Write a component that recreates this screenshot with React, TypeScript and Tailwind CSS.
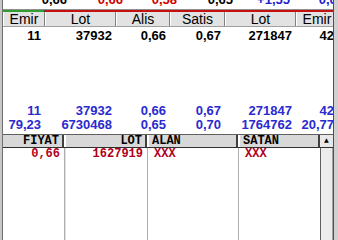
import React from 'react';

const topCols = 'grid-cols-[42px_71px_54px_55px_71px_42px]';

const prevRow = [
  { v: '0,66', c: 'text-black', w: 'w-[64px]' },
  { v: '0,66', c: 'text-[#d00000]', w: 'w-[56px]' },
  { v: '0,58', c: 'text-[#d00000]', w: 'w-[54px]' },
  { v: '0,65', c: 'text-black', w: 'w-[56px]' },
  { v: '+1,55', c: 'text-[#2020d0]', w: 'w-[57px]' },
  { v: '0,05', c: 'text-[#2020d0]', w: 'w-[54px]' },
];

const headers = ['Emir', 'Lot', 'Alis', 'Satis', 'Lot', 'Emir'];

const Row: React.FC<{ values: string[]; color: string }> = ({ values, color }) => (
  <div className={`grid ${topCols} h-[13px] leading-[13px] font-bold text-[13px] ${color}`}>
    {values.map((v, i) => (
      <div key={i} className={`text-right pr-[4px] ${i === 5 ? 'pr-0 text-left pl-[5px]' : ''}`}>
        {v}
      </div>
    ))}
  </div>
);

const App: React.FC = () => {
  return (
    <div
      className="w-[338px] h-[240px] overflow-hidden bg-white flex"
      style={{ fontFamily: '"Liberation Sans", Arial, sans-serif' }}
    >
      {/* left frame */}
      <div className="w-[2px] bg-[#c8c8c8] shrink-0" />
      <div className="w-[1px] bg-[#707070] shrink-0" />

      <div className="w-[330px] shrink-0 flex flex-col overflow-hidden">
        {/* previous row, cut off at top */}
        <div className="flex h-[9px] overflow-hidden">
          <div className="flex mt-[-8px] h-[15px] text-[13px] leading-[15px] font-bold whitespace-nowrap">
            {prevRow.map((p, i) => (
              <div key={i} className={`${p.w} shrink-0 text-right ${p.c}`}>
                {p.v}
              </div>
            ))}
          </div>
        </div>

        {/* colored bar */}
        <div className="h-[1px] bg-[#909090]" />
        <div className="flex h-[2px]">
          <div className="w-[41px] bg-[#2fa02f]" />
          <div className="w-[1px] bg-[#404040]" />
          <div className="flex-1 bg-[#c41010]" />
        </div>

        {/* header */}
        <div className={`grid ${topCols} h-[15px] bg-[#e2e2e2] border-b border-[#a0a0a0] text-[14px] leading-[14px] text-black`}>
          {headers.map((h, i) => (
            <div key={i} className="border-r border-[#808080] border-l border-l-white text-center whitespace-nowrap overflow-hidden">
              {h}
            </div>
          ))}
        </div>

        <div className="pt-[2px]">
          <Row values={['11', '37932', '0,66', '0,67', '271847', '42']} color="text-black" />
        </div>

        <div className="h-[62px]" />

        <Row values={['11', '37932', '0,66', '0,67', '271847', '42']} color="text-[#2a2ad0]" />
        <div className="h-[1px]" />
        <Row values={['79,23', '6730468', '0,65', '0,70', '1764762', '20,77']} color="text-[#2a2ad0]" />

        <div className="h-[3px]" />

        {/* lower grid */}
        <div
          className="flex-1 flex flex-col border-t border-[#606060]"
          style={{ fontFamily: '"Liberation Mono", "DejaVu Sans Mono", monospace' }}
        >
          <div className="flex h-[13px] bg-[#d8d8d8] border-b border-[#303030] text-[12px] leading-[13px] font-bold text-black">
            <div className="w-[61px] text-right pr-[3px] border-r-2 border-[#404040]">FIYAT</div>
            <div className="w-[2px] bg-white" />
            <div className="w-[81px] text-right pr-[3px] border-r-2 border-[#404040]">LOT</div>
            <div className="w-[2px] bg-white" />
            <div className="w-[89px] pl-[3px] border-r-2 border-[#404040]">ALAN</div>
            <div className="w-[2px] bg-white" />
            <div className="w-[80px] pl-[3px] border-r-2 border-[#404040]">SATAN</div>
            <div className="w-[13px] bg-[#e8e8e8] flex items-center justify-center text-[8px] leading-none">
              ▲
            </div>
          </div>
          <div className="flex flex-1 text-[12px] leading-[13px] font-bold text-[#b00020]">
            <div className="w-[62px] text-right pr-[4px] border-r border-[#b0b0b0]">0,66</div>
            <div className="w-[1px] bg-[#e0e0e0]" />
            <div className="w-[82px] text-right pr-[4px] border-r border-[#b0b0b0]">1627919</div>
            <div className="w-[91px] pl-[6px] border-r border-[#b0b0b0]">XXX</div>
            <div className="w-[81px] pl-[6px]">XXX</div>
            <div className="w-[13px] flex">
              <div className="w-[1px] bg-[#606060]" />
              <div className="flex-1 bg-[#ececec] border-r border-[#a0a0a0]" />
            </div>
          </div>
        </div>
      </div>

      {/* right frame */}
      <div className="w-[1px] bg-[#505050] shrink-0" />
      <div className="flex-1 bg-[#d0d0d0]" />
    </div>
  );
};

export default App;
